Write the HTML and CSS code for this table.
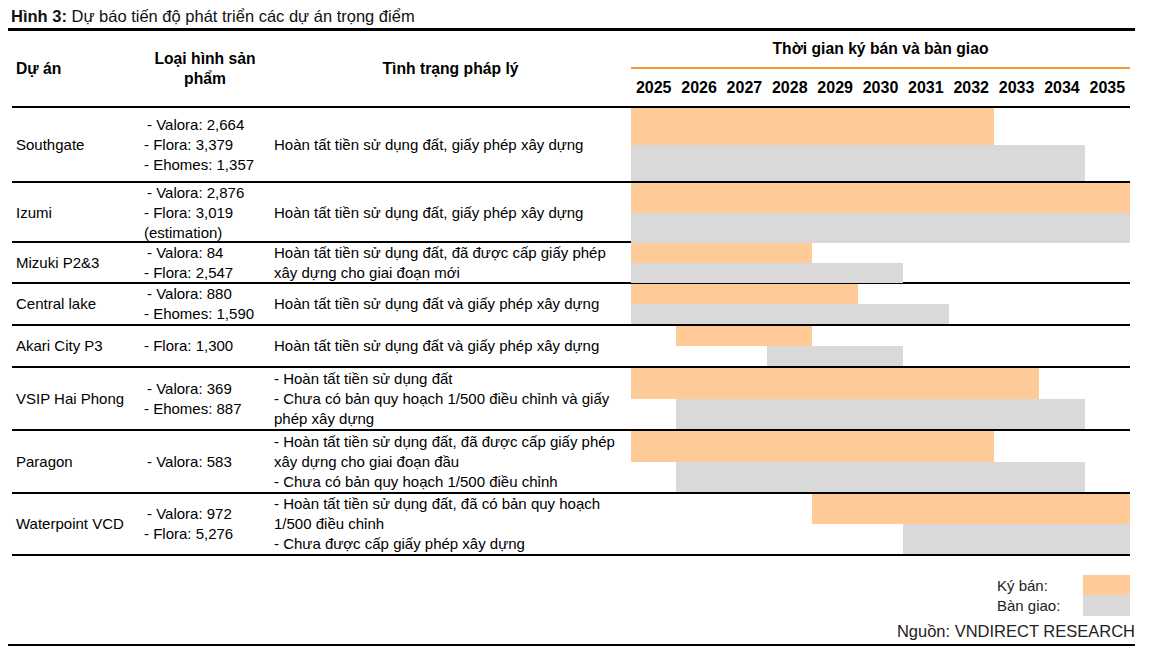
FILE: index.html
```html
<!DOCTYPE html>
<html lang="vi">
<head>
<meta charset="utf-8">
<title>Hình 3</title>
<link rel="stylesheet" href="styles.css">
</head>
<body>
<div class="page">
  <div class="title"><b>Hình 3:</b> Dự báo tiến độ phát triển các dự án trọng điểm</div>
  <div class="frame">
    <div class="table">
      <div class="row head">
        <div class="cell name"><b>Dự án</b></div>
        <div class="cell prod center"><b>Loại hình sản<br>phẩm</b></div>
        <div class="cell status center"><b>Tình trạng pháp lý</b></div>
        <div class="gantt-head">
          <div class="gh-title">Thời gian ký bán và bàn giao</div>
          <div class="years">
            <span>2025</span><span>2026</span><span>2027</span><span>2028</span><span>2029</span><span>2030</span><span>2031</span><span>2032</span><span>2033</span><span>2034</span><span>2035</span>
          </div>
        </div>
      </div>

      <div class="row r-southgate">
        <div class="cell name">Southgate</div>
        <div class="cell prod"><div><span class="ind">- Valora: 2,664</span><br>- Flora: 3,379<br>- Ehomes: 1,357</div></div>
        <div class="cell status">Hoàn tất tiền sử dụng đất, giấy phép xây dựng</div>
        <div class="gantt"><div class="bar sell" style="grid-column:1/9"></div><div class="bar hand" style="grid-column:1/11"></div></div>
      </div>

      <div class="row r-izumi">
        <div class="cell name">Izumi</div>
        <div class="cell prod"><div><span class="ind">- Valora: 2,876</span><br>- Flora: 3,019<br>(estimation)</div></div>
        <div class="cell status">Hoàn tất tiền sử dụng đất, giấy phép xây dựng</div>
        <div class="gantt"><div class="bar sell" style="grid-column:1/12"></div><div class="bar hand" style="grid-column:1/12"></div></div>
      </div>

      <div class="row r-mizuki">
        <div class="cell name">Mizuki P2&amp;3</div>
        <div class="cell prod"><div><span class="ind">- Valora: 84</span><br>- Flora: 2,547</div></div>
        <div class="cell status"><div>Hoàn tất tiền sử dụng đất, đã được cấp giấy phép<br>xây dựng cho giai đoạn mới</div></div>
        <div class="gantt"><div class="bar sell" style="grid-column:1/5"></div><div class="bar hand" style="grid-column:1/7"></div></div>
      </div>

      <div class="row r-central">
        <div class="cell name">Central lake</div>
        <div class="cell prod"><div><span class="ind">- Valora: 880</span><br>- Ehomes: 1,590</div></div>
        <div class="cell status">Hoàn tất tiền sử dụng đất và giấy phép xây dựng</div>
        <div class="gantt"><div class="bar sell" style="grid-column:1/6"></div><div class="bar hand" style="grid-column:1/8"></div></div>
      </div>

      <div class="row r-akari">
        <div class="cell name">Akari City P3</div>
        <div class="cell prod">- Flora: 1,300</div>
        <div class="cell status">Hoàn tất tiền sử dụng đất và giấy phép xây dựng</div>
        <div class="gantt"><div class="bar sell" style="grid-column:2/5"></div><div class="bar hand" style="grid-column:4/7"></div></div>
      </div>

      <div class="row r-vsip">
        <div class="cell name">VSIP Hai Phong</div>
        <div class="cell prod"><div><span class="ind">- Valora: 369</span><br>- Ehomes: 887</div></div>
        <div class="cell status"><div>- Hoàn tất tiền sử dụng đất<br>- Chưa có bản quy hoạch 1/500 điều chỉnh và giấy<br>phép xây dựng</div></div>
        <div class="gantt"><div class="bar sell" style="grid-column:1/10"></div><div class="bar hand" style="grid-column:2/11"></div></div>
      </div>

      <div class="row r-paragon">
        <div class="cell name">Paragon</div>
        <div class="cell prod"><span class="ind">- Valora: 583</span></div>
        <div class="cell status"><div>- Hoàn tất tiền sử dụng đất, đã được cấp giấy phép<br>xây dựng cho giai đoạn đầu<br>- Chưa có bản quy hoạch 1/500 điều chỉnh</div></div>
        <div class="gantt"><div class="bar sell" style="grid-column:1/9"></div><div class="bar hand" style="grid-column:2/11"></div></div>
      </div>

      <div class="row r-water">
        <div class="cell name">Waterpoint VCD</div>
        <div class="cell prod"><div><span class="ind">- Valora: 972</span><br>- Flora: 5,276</div></div>
        <div class="cell status"><div>- Hoàn tất tiền sử dụng đất, đã có bản quy hoạch<br>1/500 điều chỉnh<br>- Chưa được cấp giấy phép xây dựng</div></div>
        <div class="gantt"><div class="bar sell" style="grid-column:5/12"></div><div class="bar hand" style="grid-column:7/12"></div></div>
      </div>
    </div>

    <div class="legend">
      <span class="lg-text">Ký bán:</span><span class="swatch sell"></span>
      <span class="lg-text">Bàn giao:</span><span class="swatch hand"></span>
    </div>
    <div class="source">Nguồn: VNDIRECT RESEARCH</div>
  </div>
</div>
</body>
</html>
```

FILE: styles.css
```css
* { box-sizing: border-box; }

body {
  margin: 0;
  background: #fff;
  color: #000;
  font-family: "Liberation Sans", Arial, sans-serif;
  font-size: 15px;
}

.page {
  width: 1155px;
  padding: 6px 0 0 8px;
}

.title {
  padding-left: 3px;
  height: 20px;
  line-height: 20px;
  margin-bottom: 2px;
  font-size: 16.5px;
  color: #111;
}

.frame {
  width: 1127px;
  border-top: 3px solid #000;
  border-bottom: 2px solid #000;
  padding-bottom: 3px;
}

.table {
  margin-left: 4px;
  width: 1118px;
}

.row {
  display: grid;
  grid-template-columns: 128px 130px 361px 499px;
  border-bottom: 2px solid #000;
  line-height: 20px;
}

.cell {
  display: flex;
  align-items: center;
  padding-left: 4px;
  white-space: nowrap;
}

.cell.center {
  justify-content: center;
  text-align: center;
  padding-left: 0;
}

.ind { padding-left: 3px; }

.head {
  height: 77px;
  font-size: 15.7px;
}
.r-southgate { height: 75px; }
.r-izumi { height: 60px; }
.r-mizuki { height: 41px; }
.r-central { height: 42px; }
.r-akari { height: 42px; }
.r-vsip { height: 63px; }
.r-paragon { height: 63px; }
.r-water { height: 62px; }

.gantt-head {
  display: flex;
  flex-direction: column;
  font-weight: bold;
}

.gh-title {
  height: 38px;
  display: flex;
  align-items: center;
  justify-content: center;
  border-bottom: 2px solid #f79a2a;
}

.years {
  flex: 1;
  display: grid;
  grid-template-columns: repeat(11, 1fr);
  align-items: center;
  text-align: center;
  font-size: 16px;
}

.gantt {
  display: grid;
  grid-template-columns: repeat(11, 1fr);
  grid-template-rows: 1fr 1fr;
}

.bar.sell { grid-row: 1; background: #fdca98; }
.bar.hand { grid-row: 2; background: #d9d9d9; }

.legend {
  margin: 19px 5px 0 auto;
  width: 133px;
  display: grid;
  grid-template-columns: 86px 47px;
  grid-template-rows: 20px 21px;
  align-items: center;
  color: #222;
}

.swatch { height: 100%; }
.swatch.sell { background: #fdca98; }
.swatch.hand { background: #d9d9d9; }

.source {
  margin-top: 5px;
  text-align: right;
  font-size: 16.5px;
  line-height: 20px;
  color: #222;
}
```
